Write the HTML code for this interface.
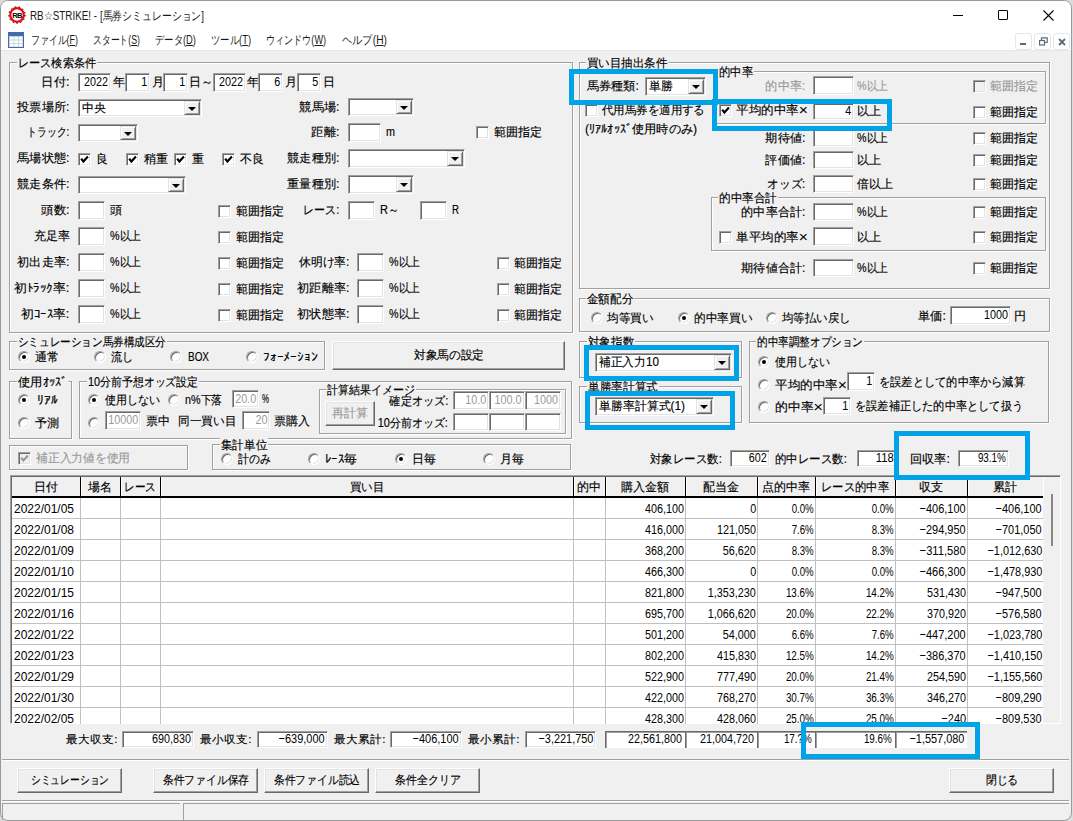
<!DOCTYPE html><html><head><meta charset="utf-8"><title>RB STRIKE</title><style>
*{box-sizing:border-box}
html,body{margin:0;padding:0}
body{-webkit-text-stroke:0.15px currentColor;width:1073px;height:821px;overflow:hidden;position:relative;background:#dcdcdc;font-family:"Liberation Sans",sans-serif;font-size:12px;color:#000}
.a{position:absolute}
.t{position:absolute;white-space:nowrap;line-height:14px;height:14px}
.t span{display:inline-block}
.x{font-style:normal;font-size:15px;line-height:0;-webkit-text-stroke:0;position:relative;top:1px}
.n{font-size:13px;-webkit-text-stroke:0}
.gl span{background:#f0f0f0;padding:0 1px 0 1px}
.e{position:absolute;background:#fff;border:1px solid;border-color:#a0a0a0 #fff #fff #a0a0a0;box-shadow:inset 1px 1px 0 #696969,inset -1px -1px 0 #e3e3e3}
.cb{position:absolute;background:#f0f0f0;border:1px solid;border-color:#e3e3e3 #696969 #696969 #e3e3e3;box-shadow:inset 1px 1px 0 #fff,inset -1px -1px 0 #a0a0a0}
.arr{position:absolute;width:0;height:0;border-left:4px solid transparent;border-right:4px solid transparent;border-top:4px solid #000}
.g{position:absolute;border:1px solid #a0a0a0;box-shadow:inset 1px 1px 0 #fff,1px 1px 0 #fff}
.ck{position:absolute;width:13px;height:13px;background:#fff;border:1px solid;border-color:#a0a0a0 #fff #fff #a0a0a0;box-shadow:inset 1px 1px 0 #696969,inset -1px -1px 0 #e3e3e3}
.ck.dis{background:#f0f0f0}
.rd{position:absolute;width:12px;height:12px;border-radius:50%;background:#fff;border:1px solid;border-color:#a0a0a0 #fff #fff #a0a0a0;box-shadow:inset 1px 1px 0 #696969,inset -1px -1px 0 #e3e3e3}
.dot{position:absolute;width:4px;height:4px;border-radius:50%;background:#000}
.b{position:absolute;background:#f0f0f0;border:1px solid;border-color:#fff #696969 #696969 #fff;box-shadow:inset -1px -1px 0 #a0a0a0,inset 1px 1px 0 #e3e3e3}
.blue{position:absolute;border:5px solid #00a2e8}
.win{position:absolute;left:0;top:0;width:1072px;height:821px;border:1px solid #9a9a9a;border-radius:8px 8px 8px 8px;background:#f0f0f0;overflow:hidden}
</style></head><body>
<div class="win"></div>
<div class="a" style="left:1px;top:1px;width:1070px;height:49px;background:#fff;border-radius:7px 7px 0 0"></div>
<svg class="a" style="left:8px;top:6px;-webkit-text-stroke:0" width="18" height="18"><circle cx="9" cy="9" r="6.8" fill="#fff" stroke="#f00" stroke-width="2.2"/><circle cx="9" cy="9" r="8.2" fill="none" stroke="#000" stroke-width="1" stroke-dasharray="1.5 2.5"/><text x="9" y="11.8" font-size="7.5" font-weight="bold" text-anchor="middle" letter-spacing="-0.6" font-family="Liberation Sans">RB</text></svg>
<div class="t" style="top:9px;left:30px;color:#1a1a1a;font-size:12px;-webkit-text-stroke:0"><span style="--w:174.0;transform:scaleX(0.822);transform-origin:left">RB☆STRIKE! - [馬券シミュレーション]</span></div>
<div class="a" style="left:953px;top:15px;width:10px;height:1px;background:#000"></div>
<div class="a" style="left:998px;top:10px;width:10px;height:10px;border:1px solid #000;border-radius:1px"></div>
<svg class="a" style="left:1043px;top:10px" width="11" height="11"><path d="M0.5 0.5 L10.5 10.5 M10.5 0.5 L0.5 10.5" stroke="#000" stroke-width="1.1"/></svg>
<svg class="a" style="left:8px;top:32px" width="16" height="16"><rect x="0.5" y="0.5" width="15" height="15" fill="#c8d4e4" stroke="#4a6a9a"/><rect x="1" y="1" width="14" height="3" fill="#3d6eb4"/><g fill="#fff"><rect x="2" y="5" width="3.5" height="2.5"/><rect x="6.5" y="5" width="3.5" height="2.5"/><rect x="11" y="5" width="3" height="2.5"/><rect x="2" y="8.5" width="3.5" height="2.5"/><rect x="6.5" y="8.5" width="3.5" height="2.5"/><rect x="11" y="8.5" width="3" height="2.5"/><rect x="2" y="12" width="3.5" height="2.5"/><rect x="6.5" y="12" width="3.5" height="2.5"/><rect x="11" y="12" width="3" height="2.5"/></g></svg>
<div class="t" style="top:33px;left:31px;color:#1a1a1a;-webkit-text-stroke:0"><span style="--w:47.0;transform:scaleX(0.742);transform-origin:left">ファイル(<u>F</u>)</span></div>
<div class="t" style="top:33px;left:93px;color:#1a1a1a;-webkit-text-stroke:0"><span style="--w:47.0;transform:scaleX(0.734);transform-origin:left">スタート(<u>S</u>)</span></div>
<div class="t" style="top:33px;left:155px;color:#1a1a1a;-webkit-text-stroke:0"><span style="--w:41.0;transform:scaleX(0.778);transform-origin:left">データ(<u>D</u>)</span></div>
<div class="t" style="top:33px;left:211px;color:#1a1a1a;-webkit-text-stroke:0"><span style="--w:40.0;transform:scaleX(0.779);transform-origin:left">ツール(<u>T</u>)</span></div>
<div class="t" style="top:33px;left:266px;color:#1a1a1a;-webkit-text-stroke:0"><span style="--w:60.0;transform:scaleX(0.756);transform-origin:left">ウィンドウ(<u>W</u>)</span></div>
<div class="t" style="top:33px;left:342px;color:#1a1a1a;-webkit-text-stroke:0"><span style="--w:45.0;transform:scaleX(0.854);transform-origin:left">ヘルプ(<u>H</u>)</span></div>
<div class="a" style="left:1015px;top:33px;width:17px;height:17px;border:1px solid #e6e6e6;border-radius:3px;background:#fff"></div>
<div class="a" style="left:1034px;top:33px;width:17px;height:17px;border:1px solid #e6e6e6;border-radius:3px;background:#fff"></div>
<div class="a" style="left:1053px;top:33px;width:17px;height:17px;border:1px solid #e6e6e6;border-radius:3px;background:#fff"></div>
<div class="a" style="left:1020px;top:43px;width:6px;height:2px;background:#5a6a7a"></div>
<svg class="a" style="left:1039px;top:37px" width="9" height="9"><rect x="0.5" y="3.5" width="5" height="4.5" fill="none" stroke="#5a6a7a" stroke-width="1.2"/><path d="M2.5 3 V0.8 H8.2 V5.5 H6" fill="none" stroke="#5a6a7a" stroke-width="1.2"/></svg>
<svg class="a" style="left:1058px;top:38px" width="8" height="8"><path d="M1 1 L7 7 M7 1 L1 7" stroke="#5a6a7a" stroke-width="1.8"/></svg>
<div class="a" style="left:1px;top:50px;width:1070px;height:1px;background:#e8e8e8"></div>
<div class="g" style="left:9px;top:62px;width:564px;height:271px;"></div>
<div class="t gl" style="top:56px;left:17px;"><span style="--w:80.0;transform:scaleX(0.930);transform-origin:left">レース検索条件</span></div>
<div class="t" style="top:75px;left:-191px;width:260px;text-align:right;"><span style="--w:28.0;transform:scaleX(1.024);transform-origin:right">日付:</span></div>
<div class="e" style="left:78px;top:73px;width:33px;height:19px;"></div>
<div class="t n" style="top:75px;left:75px;width:33px;text-align:right;"><span style="--w:24.0;transform:scaleX(0.830);transform-origin:right">2022</span></div>
<div class="t" style="top:75px;left:113px;"><span style="--w:12.0;transform:scaleX(1.000);transform-origin:left">年</span></div>
<div class="e" style="left:125px;top:73px;width:25px;height:19px;"></div>
<div class="t n" style="top:75px;left:122px;width:25px;text-align:right;"><span style="--w:6.0;transform:scaleX(0.829);transform-origin:right">1</span></div>
<div class="t" style="top:75px;left:152px;"><span style="--w:12.0;transform:scaleX(1.000);transform-origin:left">月</span></div>
<div class="e" style="left:163px;top:73px;width:25px;height:19px;"></div>
<div class="t n" style="top:75px;left:160px;width:25px;text-align:right;"><span style="--w:6.0;transform:scaleX(0.829);transform-origin:right">1</span></div>
<div class="t" style="top:75px;left:189px;"><span style="--w:24.0;transform:scaleX(1.000);transform-origin:left">日～</span></div>
<div class="e" style="left:213px;top:73px;width:33px;height:19px;"></div>
<div class="t n" style="top:75px;left:210px;width:33px;text-align:right;"><span style="--w:24.0;transform:scaleX(0.830);transform-origin:right">2022</span></div>
<div class="t" style="top:75px;left:247px;"><span style="--w:12.0;transform:scaleX(1.000);transform-origin:left">年</span></div>
<div class="e" style="left:258px;top:73px;width:25px;height:19px;"></div>
<div class="t n" style="top:75px;left:255px;width:25px;text-align:right;"><span style="--w:6.0;transform:scaleX(0.829);transform-origin:right">6</span></div>
<div class="t" style="top:75px;left:285px;"><span style="--w:12.0;transform:scaleX(1.000);transform-origin:left">月</span></div>
<div class="e" style="left:297px;top:73px;width:24px;height:19px;"></div>
<div class="t n" style="top:75px;left:294px;width:24px;text-align:right;"><span style="--w:6.0;transform:scaleX(0.829);transform-origin:right">5</span></div>
<div class="t" style="top:75px;left:323px;"><span style="--w:12.0;transform:scaleX(1.000);transform-origin:left">日</span></div>
<div class="t" style="top:100px;left:-191px;width:260px;text-align:right;"><span style="--w:52.0;transform:scaleX(1.013);transform-origin:right">投票場所:</span></div>
<div class="e" style="left:78px;top:99px;width:124px;height:18px;"></div>
<div class="cb" style="left:184px;top:101px;width:16px;height:14px;"></div>
<div class="arr" style="left:188px;top:107px;"></div>
<div class="t" style="top:101px;left:82px;"><span style="--w:24.0;transform:scaleX(1.000);transform-origin:left">中央</span></div>
<div class="t" style="top:100px;left:79px;width:260px;text-align:right;"><span style="--w:40.0;transform:scaleX(1.017);transform-origin:right">競馬場:</span></div>
<div class="e" style="left:348px;top:98px;width:66px;height:18px;"></div>
<div class="cb" style="left:396px;top:100px;width:16px;height:14px;"></div>
<div class="arr" style="left:400px;top:106px;"></div>
<div class="t" style="top:125px;left:-191px;width:260px;text-align:right;"><span style="--w:42.0;transform:scaleX(0.818);transform-origin:right">トラック:</span></div>
<div class="e" style="left:78px;top:124px;width:60px;height:18px;"></div>
<div class="cb" style="left:120px;top:126px;width:16px;height:14px;"></div>
<div class="arr" style="left:124px;top:132px;"></div>
<div class="t" style="top:125px;left:79px;width:260px;text-align:right;"><span style="--w:28.0;transform:scaleX(1.024);transform-origin:right">距離:</span></div>
<div class="e" style="left:348px;top:123px;width:33px;height:19px;"></div>
<div class="t" style="top:125px;left:386px;"><span style="--w:9.0;transform:scaleX(0.900);transform-origin:left">m</span></div>
<div class="ck" style="left:476px;top:126px;"></div>
<div class="t" style="top:125px;left:494px;"><span style="--w:48.0;transform:scaleX(1.000);transform-origin:left">範囲指定</span></div>
<div class="t" style="top:151px;left:-191px;width:260px;text-align:right;"><span style="--w:52.0;transform:scaleX(1.013);transform-origin:right">馬場状態:</span></div>
<div class="ck" style="left:78px;top:153px;"></div>
<svg class="a" style="left:78px;top:153px" width="13" height="13"><path d="M3.2 5.6 L5.4 8.6 L9.9 3.6" stroke="#000" stroke-width="2.2" fill="none"/></svg>
<div class="t" style="top:152px;left:96px;"><span style="--w:12.0;transform:scaleX(1.000);transform-origin:left">良</span></div>
<div class="ck" style="left:126px;top:153px;"></div>
<svg class="a" style="left:126px;top:153px" width="13" height="13"><path d="M3.2 5.6 L5.4 8.6 L9.9 3.6" stroke="#000" stroke-width="2.2" fill="none"/></svg>
<div class="t" style="top:152px;left:144px;"><span style="--w:24.0;transform:scaleX(1.000);transform-origin:left">稍重</span></div>
<div class="ck" style="left:174px;top:153px;"></div>
<svg class="a" style="left:174px;top:153px" width="13" height="13"><path d="M3.2 5.6 L5.4 8.6 L9.9 3.6" stroke="#000" stroke-width="2.2" fill="none"/></svg>
<div class="t" style="top:152px;left:192px;"><span style="--w:12.0;transform:scaleX(1.000);transform-origin:left">重</span></div>
<div class="ck" style="left:222px;top:153px;"></div>
<svg class="a" style="left:222px;top:153px" width="13" height="13"><path d="M3.2 5.6 L5.4 8.6 L9.9 3.6" stroke="#000" stroke-width="2.2" fill="none"/></svg>
<div class="t" style="top:152px;left:240px;"><span style="--w:24.0;transform:scaleX(1.000);transform-origin:left">不良</span></div>
<div class="t" style="top:151px;left:79px;width:260px;text-align:right;"><span style="--w:52.0;transform:scaleX(1.013);transform-origin:right">競走種別:</span></div>
<div class="e" style="left:348px;top:149px;width:117px;height:19px;"></div>
<div class="cb" style="left:447px;top:151px;width:16px;height:15px;"></div>
<div class="arr" style="left:451px;top:157px;"></div>
<div class="t" style="top:177px;left:-191px;width:260px;text-align:right;"><span style="--w:52.0;transform:scaleX(1.013);transform-origin:right">競走条件:</span></div>
<div class="e" style="left:78px;top:176px;width:108px;height:18px;"></div>
<div class="cb" style="left:168px;top:178px;width:16px;height:14px;"></div>
<div class="arr" style="left:172px;top:184px;"></div>
<div class="t" style="top:177px;left:79px;width:260px;text-align:right;"><span style="--w:52.0;transform:scaleX(1.013);transform-origin:right">重量種別:</span></div>
<div class="e" style="left:348px;top:175px;width:66px;height:19px;"></div>
<div class="cb" style="left:396px;top:177px;width:16px;height:15px;"></div>
<div class="arr" style="left:400px;top:183px;"></div>
<div class="t" style="top:203px;left:-191px;width:260px;text-align:right;"><span style="--w:28.0;transform:scaleX(1.024);transform-origin:right">頭数:</span></div>
<div class="e" style="left:78px;top:201px;width:27px;height:19px;"></div>
<div class="t" style="top:203px;left:110px;"><span style="--w:12.0;transform:scaleX(1.000);transform-origin:left">頭</span></div>
<div class="ck" style="left:218px;top:205px;"></div>
<div class="t" style="top:204px;left:236px;"><span style="--w:48.0;transform:scaleX(1.000);transform-origin:left">範囲指定</span></div>
<div class="t" style="top:203px;left:79px;width:260px;text-align:right;"><span style="--w:36.0;transform:scaleX(0.915);transform-origin:right">レース:</span></div>
<div class="e" style="left:348px;top:201px;width:27px;height:19px;"></div>
<div class="t" style="top:203px;left:380px;"><span style="--w:19.0;transform:scaleX(0.919);transform-origin:left">R～</span></div>
<div class="e" style="left:420px;top:201px;width:27px;height:19px;"></div>
<div class="t" style="top:203px;left:452px;"><span style="--w:7.0;transform:scaleX(0.807);transform-origin:left">R</span></div>
<div class="t" style="top:229px;left:-190px;width:260px;text-align:right;"><span style="--w:36.0;transform:scaleX(1.000);transform-origin:right">充足率</span></div>
<div class="e" style="left:78px;top:227px;width:27px;height:19px;"></div>
<div class="t" style="top:229px;left:110px;"><span style="--w:31.0;transform:scaleX(0.894);transform-origin:left">%以上</span></div>
<div class="ck" style="left:218px;top:231px;"></div>
<div class="t" style="top:230px;left:236px;"><span style="--w:48.0;transform:scaleX(1.000);transform-origin:left">範囲指定</span></div>
<div class="t" style="top:255px;left:-191px;width:260px;text-align:right;"><span style="--w:52.0;transform:scaleX(1.013);transform-origin:right">初出走率:</span></div>
<div class="e" style="left:78px;top:253px;width:27px;height:19px;"></div>
<div class="t" style="top:255px;left:110px;"><span style="--w:31.0;transform:scaleX(0.894);transform-origin:left">%以上</span></div>
<div class="ck" style="left:218px;top:257px;"></div>
<div class="t" style="top:256px;left:236px;"><span style="--w:48.0;transform:scaleX(1.000);transform-origin:left">範囲指定</span></div>
<div class="t" style="top:255px;left:89px;width:260px;text-align:right;"><span style="--w:50.3;transform:scaleX(0.980);transform-origin:right">休明け率:</span></div>
<div class="e" style="left:357px;top:253px;width:27px;height:19px;"></div>
<div class="t" style="top:255px;left:389px;"><span style="--w:31.0;transform:scaleX(0.894);transform-origin:left">%以上</span></div>
<div class="ck" style="left:497px;top:257px;"></div>
<div class="t" style="top:256px;left:514px;"><span style="--w:48.0;transform:scaleX(1.000);transform-origin:left">範囲指定</span></div>
<div class="t" style="top:281px;left:-191px;width:260px;text-align:right;"><span style="--w:55.2;transform:scaleX(1.075);transform-origin:right">初ﾄﾗｯｸ率:</span></div>
<div class="e" style="left:78px;top:279px;width:27px;height:19px;"></div>
<div class="t" style="top:281px;left:110px;"><span style="--w:31.0;transform:scaleX(0.894);transform-origin:left">%以上</span></div>
<div class="ck" style="left:218px;top:283px;"></div>
<div class="t" style="top:282px;left:236px;"><span style="--w:48.0;transform:scaleX(1.000);transform-origin:left">範囲指定</span></div>
<div class="t" style="top:281px;left:89px;width:260px;text-align:right;"><span style="--w:52.0;transform:scaleX(1.013);transform-origin:right">初距離率:</span></div>
<div class="e" style="left:357px;top:279px;width:27px;height:19px;"></div>
<div class="t" style="top:281px;left:389px;"><span style="--w:31.0;transform:scaleX(0.894);transform-origin:left">%以上</span></div>
<div class="ck" style="left:497px;top:283px;"></div>
<div class="t" style="top:282px;left:514px;"><span style="--w:48.0;transform:scaleX(1.000);transform-origin:left">範囲指定</span></div>
<div class="t" style="top:307px;left:-191px;width:260px;text-align:right;"><span style="--w:48.4;transform:scaleX(1.067);transform-origin:right">初ｺｰｽ率:</span></div>
<div class="e" style="left:78px;top:305px;width:27px;height:19px;"></div>
<div class="t" style="top:307px;left:110px;"><span style="--w:31.0;transform:scaleX(0.894);transform-origin:left">%以上</span></div>
<div class="ck" style="left:218px;top:309px;"></div>
<div class="t" style="top:308px;left:236px;"><span style="--w:48.0;transform:scaleX(1.000);transform-origin:left">範囲指定</span></div>
<div class="t" style="top:307px;left:89px;width:260px;text-align:right;"><span style="--w:52.0;transform:scaleX(1.013);transform-origin:right">初状態率:</span></div>
<div class="e" style="left:357px;top:305px;width:27px;height:19px;"></div>
<div class="t" style="top:307px;left:389px;"><span style="--w:31.0;transform:scaleX(0.894);transform-origin:left">%以上</span></div>
<div class="ck" style="left:497px;top:309px;"></div>
<div class="t" style="top:308px;left:514px;"><span style="--w:48.0;transform:scaleX(1.000);transform-origin:left">範囲指定</span></div>
<div class="g" style="left:579px;top:62px;width:471px;height:227px;"></div>
<div class="t gl" style="top:56px;left:586px;"><span style="--w:82.3;transform:scaleX(0.957);transform-origin:left">買い目抽出条件</span></div>
<div class="t" style="top:79px;left:587px;"><span style="--w:52.0;transform:scaleX(1.013);transform-origin:left">馬券種類:</span></div>
<div class="e" style="left:645px;top:77px;width:61px;height:19px;"></div>
<div class="cb" style="left:688px;top:79px;width:16px;height:15px;"></div>
<div class="arr" style="left:692px;top:85px;"></div>
<div class="t" style="top:79px;left:649px;"><span style="--w:24.0;transform:scaleX(1.000);transform-origin:left">単勝</span></div>
<div class="ck" style="left:585px;top:104px;"></div>
<div class="t" style="top:103px;left:602px;"><span style="--w:102.9;transform:scaleX(0.953);transform-origin:left">代用馬券を適用する</span></div>
<div class="t" style="top:122px;left:585px;"><span style="--w:112.2;transform:scaleX(1.020);transform-origin:left">(ﾘｱﾙｵｯｽﾞ使用時のみ)</span></div>
<div class="g" style="left:713px;top:71px;width:333px;height:53px;"></div>
<div class="t gl" style="top:65px;left:718px;"><span style="--w:36.0;transform:scaleX(0.947);transform-origin:left">的中率</span></div>
<div class="t" style="top:79px;left:745px;width:60px;text-align:right;color:#999999;"><span style="--w:40.0;transform:scaleX(1.017);transform-origin:right">的中率:</span></div>
<div class="e" style="left:813px;top:76px;width:41px;height:19px;"></div>
<div class="t" style="top:79px;left:857px;color:#999999;"><span style="--w:31.0;transform:scaleX(0.894);transform-origin:left">%以上</span></div>
<div class="ck dis" style="left:973px;top:80px;"></div>
<div class="t" style="top:79px;left:990px;color:#999999;"><span style="--w:48.0;transform:scaleX(1.000);transform-origin:left">範囲指定</span></div>
<div class="ck" style="left:719px;top:104px;"></div>
<svg class="a" style="left:719px;top:104px" width="13" height="13"><path d="M3.2 5.6 L5.4 8.6 L9.9 3.6" stroke="#000" stroke-width="2.2" fill="none"/></svg>
<div class="t" style="top:103px;left:736px;"><span style="--w:72.0;transform:scaleX(1.047);transform-origin:left">平均的中率<i class=x>×</i></span></div>
<div class="e" style="left:813px;top:103px;width:41px;height:17px;"></div>
<div class="t n" style="top:104px;left:810px;width:41px;text-align:right;"><span style="--w:6.0;transform:scaleX(0.829);transform-origin:right">4</span></div>
<div class="t" style="top:104px;left:857px;"><span style="--w:24.0;transform:scaleX(1.000);transform-origin:left">以上</span></div>
<div class="ck" style="left:973px;top:106px;"></div>
<div class="t" style="top:105px;left:990px;"><span style="--w:48.0;transform:scaleX(1.000);transform-origin:left">範囲指定</span></div>
<div class="t" style="top:131px;left:545px;width:260px;text-align:right;"><span style="--w:40.0;transform:scaleX(1.017);transform-origin:right">期待値:</span></div>
<div class="e" style="left:813px;top:129px;width:41px;height:18px;"></div>
<div class="t" style="top:131px;left:857px;"><span style="--w:31.0;transform:scaleX(0.894);transform-origin:left">%以上</span></div>
<div class="ck" style="left:973px;top:132px;"></div>
<div class="t" style="top:131px;left:990px;"><span style="--w:48.0;transform:scaleX(1.000);transform-origin:left">範囲指定</span></div>
<div class="t" style="top:153px;left:545px;width:260px;text-align:right;"><span style="--w:40.0;transform:scaleX(1.017);transform-origin:right">評価値:</span></div>
<div class="e" style="left:813px;top:151px;width:41px;height:18px;"></div>
<div class="t" style="top:153px;left:857px;"><span style="--w:24.0;transform:scaleX(1.000);transform-origin:left">以上</span></div>
<div class="ck" style="left:973px;top:154px;"></div>
<div class="t" style="top:153px;left:990px;"><span style="--w:48.0;transform:scaleX(1.000);transform-origin:left">範囲指定</span></div>
<div class="t" style="top:177px;left:545px;width:260px;text-align:right;"><span style="--w:38.0;transform:scaleX(0.966);transform-origin:right">オッズ:</span></div>
<div class="e" style="left:813px;top:175px;width:41px;height:18px;"></div>
<div class="t" style="top:177px;left:857px;"><span style="--w:36.0;transform:scaleX(1.000);transform-origin:left">倍以上</span></div>
<div class="ck" style="left:973px;top:178px;"></div>
<div class="t" style="top:177px;left:990px;"><span style="--w:48.0;transform:scaleX(1.000);transform-origin:left">範囲指定</span></div>
<div class="g" style="left:711px;top:197px;width:335px;height:54px;"></div>
<div class="t gl" style="top:191px;left:718px;"><span style="--w:60.0;transform:scaleX(0.968);transform-origin:left">的中率合計</span></div>
<div class="t" style="top:205px;left:545px;width:260px;text-align:right;"><span style="--w:64.0;transform:scaleX(1.010);transform-origin:right">的中率合計:</span></div>
<div class="e" style="left:813px;top:203px;width:41px;height:18px;"></div>
<div class="t" style="top:205px;left:857px;"><span style="--w:31.0;transform:scaleX(0.894);transform-origin:left">%以上</span></div>
<div class="ck" style="left:973px;top:206px;"></div>
<div class="t" style="top:205px;left:990px;"><span style="--w:48.0;transform:scaleX(1.000);transform-origin:left">範囲指定</span></div>
<div class="ck" style="left:719px;top:231px;"></div>
<div class="t" style="top:230px;left:736px;"><span style="--w:72.0;transform:scaleX(1.047);transform-origin:left">単平均的率<i class=x>×</i></span></div>
<div class="e" style="left:813px;top:227px;width:41px;height:19px;"></div>
<div class="t" style="top:230px;left:857px;"><span style="--w:24.0;transform:scaleX(1.000);transform-origin:left">以上</span></div>
<div class="ck" style="left:973px;top:231px;"></div>
<div class="t" style="top:230px;left:990px;"><span style="--w:48.0;transform:scaleX(1.000);transform-origin:left">範囲指定</span></div>
<div class="t" style="top:261px;left:545px;width:260px;text-align:right;"><span style="--w:64.0;transform:scaleX(1.010);transform-origin:right">期待値合計:</span></div>
<div class="e" style="left:813px;top:259px;width:41px;height:18px;"></div>
<div class="t" style="top:261px;left:857px;"><span style="--w:31.0;transform:scaleX(0.894);transform-origin:left">%以上</span></div>
<div class="ck" style="left:973px;top:262px;"></div>
<div class="t" style="top:261px;left:990px;"><span style="--w:48.0;transform:scaleX(1.000);transform-origin:left">範囲指定</span></div>
<div class="g" style="left:579px;top:298px;width:471px;height:34px;"></div>
<div class="t gl" style="top:292px;left:586px;"><span style="--w:48.0;transform:scaleX(0.960);transform-origin:left">金額配分</span></div>
<div class="rd" style="left:591px;top:312px;"></div>
<div class="t" style="top:311px;left:607px;"><span style="--w:46.3;transform:scaleX(0.965);transform-origin:left">均等買い</span></div>
<div class="rd" style="left:678px;top:312px;"></div>
<div class="dot" style="left:682px;top:316px;"></div>
<div class="t" style="top:311px;left:694px;"><span style="--w:58.3;transform:scaleX(0.972);transform-origin:left">的中率買い</span></div>
<div class="rd" style="left:766px;top:312px;"></div>
<div class="t" style="top:311px;left:782px;"><span style="--w:68.6;transform:scaleX(0.953);transform-origin:left">均等払い戻し</span></div>
<div class="t" style="top:309px;left:918px;"><span style="--w:28.0;transform:scaleX(1.024);transform-origin:left">単価:</span></div>
<div class="e" style="left:950px;top:306px;width:61px;height:19px;"></div>
<div class="t n" style="top:308px;left:947px;width:61px;text-align:right;"><span style="--w:24.0;transform:scaleX(0.830);transform-origin:right">1000</span></div>
<div class="t" style="top:309px;left:1014px;"><span style="--w:12.0;transform:scaleX(1.000);transform-origin:left">円</span></div>
<div class="g" style="left:9px;top:341px;width:316px;height:29px;"></div>
<div class="t gl" style="top:335px;left:17px;"><span style="--w:150.0;transform:scaleX(0.882);transform-origin:left">シミュレーション馬券構成区分</span></div>
<div class="rd" style="left:18px;top:351px;"></div>
<div class="dot" style="left:22px;top:355px;"></div>
<div class="t" style="top:350px;left:35px;"><span style="--w:24.0;transform:scaleX(1.000);transform-origin:left">通常</span></div>
<div class="rd" style="left:94px;top:351px;"></div>
<div class="t" style="top:350px;left:111px;"><span style="--w:22.3;transform:scaleX(0.929);transform-origin:left">流し</span></div>
<div class="rd" style="left:170px;top:351px;"></div>
<div class="t" style="top:350px;left:188px;"><span style="--w:21.0;transform:scaleX(0.829);transform-origin:left">BOX</span></div>
<div class="rd" style="left:246px;top:351px;"></div>
<div class="t" style="top:350px;left:263px;"><span style="--w:54.4;transform:scaleX(1.133);transform-origin:left">ﾌｫｰﾒｰｼｮﾝ</span></div>
<div class="b" style="left:332px;top:341px;width:233px;height:29px;"></div>
<div class="t" style="top:348px;left:332px;width:233px;text-align:center;"><span style="--w:70.3;transform:scaleX(0.976);transform-origin:center">対象馬の設定</span></div>
<div class="g" style="left:9px;top:381px;width:63px;height:58px;"></div>
<div class="t gl" style="top:375px;left:17px;"><span style="--w:51.2;transform:scaleX(1.024);transform-origin:left">使用ｵｯｽﾞ</span></div>
<div class="rd" style="left:18px;top:394px;"></div>
<div class="dot" style="left:22px;top:398px;"></div>
<div class="t" style="top:393px;left:37px;"><span style="--w:20.4;transform:scaleX(1.133);transform-origin:left">ﾘｱﾙ</span></div>
<div class="rd" style="left:18px;top:417px;"></div>
<div class="t" style="top:416px;left:35px;"><span style="--w:24.0;transform:scaleX(1.000);transform-origin:left">予測</span></div>
<div class="g" style="left:79px;top:381px;width:493px;height:58px;"></div>
<div class="t gl" style="top:375px;left:87px;"><span style="--w:112.0;transform:scaleX(0.908);transform-origin:left">10分前予想オッズ設定</span></div>
<div class="rd" style="left:88px;top:394px;"></div>
<div class="dot" style="left:92px;top:398px;"></div>
<div class="t" style="top:393px;left:105px;"><span style="--w:54.9;transform:scaleX(0.915);transform-origin:left">使用しない</span></div>
<div class="rd" style="left:168px;top:394px;"></div>
<div class="t" style="top:393px;left:185px;"><span style="--w:37.0;transform:scaleX(0.895);transform-origin:left">n%下落</span></div>
<div class="e" style="left:232px;top:390px;width:27px;height:18px;"></div>
<div class="t n" style="top:392px;left:229px;width:27px;text-align:right;color:#999999;"><span style="--w:21.0;transform:scaleX(0.830);transform-origin:right">20.0</span></div>
<div class="t" style="top:392px;left:262px;"><span style="--w:7.0;transform:scaleX(0.656);transform-origin:left">%</span></div>
<div class="rd" style="left:88px;top:417px;"></div>
<div class="e" style="left:105px;top:411px;width:36px;height:19px;"></div>
<div class="t n" style="top:413px;left:102px;width:36px;text-align:right;color:#999999;"><span style="--w:30.0;transform:scaleX(0.830);transform-origin:right">10000</span></div>
<div class="t" style="top:414px;left:146px;"><span style="--w:24.0;transform:scaleX(1.000);transform-origin:left">票中</span></div>
<div class="t" style="top:414px;left:178px;"><span style="--w:58.3;transform:scaleX(0.972);transform-origin:left">同一買い目</span></div>
<div class="e" style="left:242px;top:411px;width:28px;height:19px;"></div>
<div class="t n" style="top:413px;left:239px;width:28px;text-align:right;color:#999999;"><span style="--w:12.0;transform:scaleX(0.829);transform-origin:right">20</span></div>
<div class="t" style="top:414px;left:274px;"><span style="--w:36.0;transform:scaleX(1.000);transform-origin:left">票購入</span></div>
<div class="g" style="left:319px;top:389px;width:247px;height:45px;"></div>
<div class="t gl" style="top:383px;left:326px;"><span style="--w:90.0;transform:scaleX(0.918);transform-origin:left">計算結果イメージ</span></div>
<div class="b" style="left:325px;top:401px;width:50px;height:25px;"></div>
<div class="t" style="top:406px;left:325px;width:50px;text-align:center;color:#999999;"><span style="--w:36.0;transform:scaleX(1.000);transform-origin:center">再計算</span></div>
<div class="t" style="top:394px;left:188px;width:260px;text-align:right;"><span style="--w:59.0;transform:scaleX(0.931);transform-origin:right">確定オッズ:</span></div>
<div class="e" style="left:453px;top:391px;width:36px;height:19px;"></div>
<div class="t n" style="top:393px;left:450px;width:36px;text-align:right;color:#999999;"><span style="--w:21.0;transform:scaleX(0.830);transform-origin:right">10.0</span></div>
<div class="e" style="left:489px;top:391px;width:36px;height:19px;"></div>
<div class="t n" style="top:393px;left:486px;width:36px;text-align:right;color:#999999;"><span style="--w:27.0;transform:scaleX(0.830);transform-origin:right">100.0</span></div>
<div class="e" style="left:525px;top:391px;width:36px;height:19px;"></div>
<div class="t n" style="top:393px;left:522px;width:36px;text-align:right;color:#999999;"><span style="--w:24.0;transform:scaleX(0.830);transform-origin:right">1000</span></div>
<div class="t" style="top:416px;left:188px;width:260px;text-align:right;"><span style="--w:70.0;transform:scaleX(0.913);transform-origin:right">10分前オッズ:</span></div>
<div class="e" style="left:453px;top:413px;width:36px;height:18px;"></div>
<div class="e" style="left:489px;top:413px;width:36px;height:18px;"></div>
<div class="e" style="left:525px;top:413px;width:36px;height:18px;"></div>
<div class="g" style="left:9px;top:445px;width:179px;height:25px;"></div>
<div class="ck dis" style="left:18px;top:452px;"></div>
<svg class="a" style="left:18px;top:452px" width="13" height="13"><path d="M3.2 5.6 L5.4 8.6 L9.9 3.6" stroke="#999999" stroke-width="2.2" fill="none"/></svg>
<div class="t" style="top:451px;left:36px;color:#999999;"><span style="--w:94.3;transform:scaleX(0.982);transform-origin:left">補正入力値を使用</span></div>
<div class="g" style="left:212px;top:444px;width:359px;height:26px;"></div>
<div class="t gl" style="top:438px;left:220px;"><span style="--w:48.0;transform:scaleX(0.960);transform-origin:left">集計単位</span></div>
<div class="rd" style="left:221px;top:453px;"></div>
<div class="t" style="top:452px;left:238px;"><span style="--w:32.6;transform:scaleX(0.906);transform-origin:left">計のみ</span></div>
<div class="rd" style="left:308px;top:453px;"></div>
<div class="t" style="top:452px;left:325px;"><span style="--w:32.4;transform:scaleX(1.080);transform-origin:left">ﾚｰｽ毎</span></div>
<div class="rd" style="left:395px;top:453px;"></div>
<div class="dot" style="left:399px;top:457px;"></div>
<div class="t" style="top:452px;left:412px;"><span style="--w:24.0;transform:scaleX(1.000);transform-origin:left">日毎</span></div>
<div class="rd" style="left:483px;top:453px;"></div>
<div class="t" style="top:452px;left:500px;"><span style="--w:24.0;transform:scaleX(1.000);transform-origin:left">月毎</span></div>
<div class="g" style="left:579px;top:341px;width:163px;height:37px;"></div>
<div class="t gl" style="top:335px;left:587px;"><span style="--w:48.0;transform:scaleX(0.960);transform-origin:left">対象指数</span></div>
<div class="e" style="left:595px;top:353px;width:137px;height:19px;"></div>
<div class="cb" style="left:714px;top:355px;width:16px;height:15px;"></div>
<div class="arr" style="left:718px;top:361px;"></div>
<div class="t" style="top:355px;left:599px;"><span style="--w:60.0;transform:scaleX(0.978);transform-origin:left">補正入力10</span></div>
<div class="g" style="left:579px;top:386px;width:163px;height:37px;"></div>
<div class="t gl" style="top:380px;left:587px;"><span style="--w:72.0;transform:scaleX(0.973);transform-origin:left">単勝率計算式</span></div>
<div class="e" style="left:595px;top:397px;width:119px;height:19px;"></div>
<div class="cb" style="left:696px;top:399px;width:16px;height:15px;"></div>
<div class="arr" style="left:700px;top:405px;"></div>
<div class="t" style="top:399px;left:599px;"><span style="--w:86.0;transform:scaleX(0.992);transform-origin:left">単勝率計算式(1)</span></div>
<div class="g" style="left:749px;top:341px;width:300px;height:82px;"></div>
<div class="t gl" style="top:335px;left:756px;"><span style="--w:108.0;transform:scaleX(0.885);transform-origin:left">的中率調整オプション</span></div>
<div class="rd" style="left:758px;top:356px;"></div>
<div class="dot" style="left:762px;top:360px;"></div>
<div class="t" style="top:355px;left:775px;"><span style="--w:54.9;transform:scaleX(0.915);transform-origin:left">使用しない</span></div>
<div class="rd" style="left:758px;top:379px;"></div>
<div class="t" style="top:378px;left:775px;"><span style="--w:72.0;transform:scaleX(1.047);transform-origin:left">平均的中率<i class=x>×</i></span></div>
<div class="e" style="left:847px;top:372px;width:28px;height:19px;"></div>
<div class="t n" style="top:374px;left:844px;width:28px;text-align:right;"><span style="--w:6.0;transform:scaleX(0.829);transform-origin:right">1</span></div>
<div class="t" style="top:375px;left:879px;"><span style="--w:145.8;transform:scaleX(0.935);transform-origin:left">を誤差として的中率から減算</span></div>
<div class="rd" style="left:758px;top:401px;"></div>
<div class="t" style="top:400px;left:775px;"><span style="--w:48.0;transform:scaleX(1.072);transform-origin:left">的中率<i class=x>×</i></span></div>
<div class="e" style="left:823px;top:397px;width:28px;height:18px;"></div>
<div class="t n" style="top:399px;left:820px;width:28px;text-align:right;"><span style="--w:6.0;transform:scaleX(0.829);transform-origin:right">1</span></div>
<div class="t" style="top:399px;left:855px;"><span style="--w:168.1;transform:scaleX(0.934);transform-origin:left">を誤差補正した的中率として扱う</span></div>
<div class="t" style="top:452px;left:650px;"><span style="--w:72.0;transform:scaleX(0.956);transform-origin:left">対象レース数:</span></div>
<div class="e" style="left:730px;top:450px;width:40px;height:17px;"></div>
<div class="t n" style="top:451px;left:727px;width:40px;text-align:right;"><span style="--w:18.0;transform:scaleX(0.829);transform-origin:right">602</span></div>
<div class="t" style="top:452px;left:775px;"><span style="--w:72.0;transform:scaleX(0.956);transform-origin:left">的中レース数:</span></div>
<div class="e" style="left:857px;top:450px;width:40px;height:17px;"></div>
<div class="t n" style="top:451px;left:854px;width:40px;text-align:right;"><span style="--w:18.0;transform:scaleX(0.868);transform-origin:right">118</span></div>
<div class="t" style="top:452px;left:910px;"><span style="--w:40.0;transform:scaleX(1.017);transform-origin:left">回収率:</span></div>
<div class="e" style="left:958px;top:450px;width:51px;height:17px;"></div>
<div class="t n" style="top:451px;left:955px;width:51px;text-align:right;"><span style="--w:28.0;transform:scaleX(0.759);transform-origin:right">93.1%</span></div>
<div class="a" style="left:10px;top:475px;width:1051px;height:249px;background:#f0f0f0;border:1px solid #a0a0a0;border-color:#a0a0a0 #fff #fff #a0a0a0;box-shadow:inset 1px 1px 0 #696969"></div>
<div class="a" style="left:12px;top:497px;width:1031px;height:227px;background:#fff"></div>
<div class="a" style="left:12px;top:496px;width:1031px;height:2px;background:#000"></div>
<div class="t" style="top:480px;left:12px;width:68px;text-align:center;"><span style="--w:24.0;transform:scaleX(1.000);transform-origin:center">日付</span></div>
<div class="t" style="top:480px;left:80px;width:40px;text-align:center;"><span style="--w:24.0;transform:scaleX(1.000);transform-origin:center">場名</span></div>
<div class="t" style="top:480px;left:120px;width:40px;text-align:center;"><span style="--w:32.0;transform:scaleX(0.889);transform-origin:center">レース</span></div>
<div class="t" style="top:480px;left:160px;width:413px;text-align:center;"><span style="--w:34.3;transform:scaleX(0.953);transform-origin:center">買い目</span></div>
<div class="t" style="top:480px;left:573px;width:32px;text-align:center;"><span style="--w:24.0;transform:scaleX(1.000);transform-origin:center">的中</span></div>
<div class="t" style="top:480px;left:605px;width:80px;text-align:center;"><span style="--w:48.0;transform:scaleX(1.000);transform-origin:center">購入金額</span></div>
<div class="t" style="top:480px;left:685px;width:72px;text-align:center;"><span style="--w:36.0;transform:scaleX(1.000);transform-origin:center">配当金</span></div>
<div class="t" style="top:480px;left:757px;width:58px;text-align:center;"><span style="--w:48.0;transform:scaleX(1.000);transform-origin:center">点的中率</span></div>
<div class="t" style="top:480px;left:815px;width:80px;text-align:center;"><span style="--w:68.0;transform:scaleX(0.944);transform-origin:center">レース的中率</span></div>
<div class="t" style="top:480px;left:895px;width:72px;text-align:center;"><span style="--w:24.0;transform:scaleX(1.000);transform-origin:center">収支</span></div>
<div class="t" style="top:480px;left:967px;width:76px;text-align:center;"><span style="--w:24.0;transform:scaleX(1.000);transform-origin:center">累計</span></div>
<div class="a" style="left:80px;top:477px;width:1px;height:19px;background:#000"></div>
<div class="a" style="left:81px;top:477px;width:1px;height:19px;background:#fff"></div>
<div class="a" style="left:120px;top:477px;width:1px;height:19px;background:#000"></div>
<div class="a" style="left:121px;top:477px;width:1px;height:19px;background:#fff"></div>
<div class="a" style="left:160px;top:477px;width:1px;height:19px;background:#000"></div>
<div class="a" style="left:161px;top:477px;width:1px;height:19px;background:#fff"></div>
<div class="a" style="left:573px;top:477px;width:1px;height:19px;background:#000"></div>
<div class="a" style="left:574px;top:477px;width:1px;height:19px;background:#fff"></div>
<div class="a" style="left:605px;top:477px;width:1px;height:19px;background:#000"></div>
<div class="a" style="left:606px;top:477px;width:1px;height:19px;background:#fff"></div>
<div class="a" style="left:685px;top:477px;width:1px;height:19px;background:#000"></div>
<div class="a" style="left:686px;top:477px;width:1px;height:19px;background:#fff"></div>
<div class="a" style="left:757px;top:477px;width:1px;height:19px;background:#000"></div>
<div class="a" style="left:758px;top:477px;width:1px;height:19px;background:#fff"></div>
<div class="a" style="left:815px;top:477px;width:1px;height:19px;background:#000"></div>
<div class="a" style="left:816px;top:477px;width:1px;height:19px;background:#fff"></div>
<div class="a" style="left:895px;top:477px;width:1px;height:19px;background:#000"></div>
<div class="a" style="left:896px;top:477px;width:1px;height:19px;background:#fff"></div>
<div class="a" style="left:967px;top:477px;width:1px;height:19px;background:#000"></div>
<div class="a" style="left:968px;top:477px;width:1px;height:19px;background:#fff"></div>
<div class="a" style="left:12px;top:498px;width:1031px;height:226px;overflow:hidden">
<div class="a" style="left:0;top:20px;width:1031px;height:1px;background:#c0c0c0"></div>
<div class="t n" style="top:4px;left:2px;"><span style="--w:60.0;transform:scaleX(0.922);transform-origin:left">2022/01/05</span></div>
<div class="t n" style="top:4px;left:592px;width:80px;text-align:right;"><span style="--w:39.0;transform:scaleX(0.830);transform-origin:right">406,100</span></div>
<div class="t n" style="top:4px;left:664px;width:80px;text-align:right;"><span style="--w:6.0;transform:scaleX(0.829);transform-origin:right">0</span></div>
<div class="t n" style="top:4px;left:722px;width:80px;text-align:right;"><span style="--w:22.0;transform:scaleX(0.742);transform-origin:right">0.0%</span></div>
<div class="t n" style="top:4px;left:802px;width:80px;text-align:right;"><span style="--w:22.0;transform:scaleX(0.742);transform-origin:right">0.0%</span></div>
<div class="t n" style="top:4px;left:874px;width:80px;text-align:right;"><span style="--w:46.0;transform:scaleX(0.843);transform-origin:right">−406,100</span></div>
<div class="t n" style="top:4px;left:950px;width:80px;text-align:right;"><span style="--w:46.0;transform:scaleX(0.843);transform-origin:right">−406,100</span></div>
<div class="a" style="left:0;top:41px;width:1031px;height:1px;background:#c0c0c0"></div>
<div class="t n" style="top:25px;left:2px;"><span style="--w:60.0;transform:scaleX(0.922);transform-origin:left">2022/01/08</span></div>
<div class="t n" style="top:25px;left:592px;width:80px;text-align:right;"><span style="--w:39.0;transform:scaleX(0.830);transform-origin:right">416,000</span></div>
<div class="t n" style="top:25px;left:664px;width:80px;text-align:right;"><span style="--w:39.0;transform:scaleX(0.830);transform-origin:right">121,050</span></div>
<div class="t n" style="top:25px;left:722px;width:80px;text-align:right;"><span style="--w:22.0;transform:scaleX(0.742);transform-origin:right">7.6%</span></div>
<div class="t n" style="top:25px;left:802px;width:80px;text-align:right;"><span style="--w:22.0;transform:scaleX(0.742);transform-origin:right">8.3%</span></div>
<div class="t n" style="top:25px;left:874px;width:80px;text-align:right;"><span style="--w:46.0;transform:scaleX(0.843);transform-origin:right">−294,950</span></div>
<div class="t n" style="top:25px;left:950px;width:80px;text-align:right;"><span style="--w:46.0;transform:scaleX(0.843);transform-origin:right">−701,050</span></div>
<div class="a" style="left:0;top:62px;width:1031px;height:1px;background:#c0c0c0"></div>
<div class="t n" style="top:46px;left:2px;"><span style="--w:60.0;transform:scaleX(0.922);transform-origin:left">2022/01/09</span></div>
<div class="t n" style="top:46px;left:592px;width:80px;text-align:right;"><span style="--w:39.0;transform:scaleX(0.830);transform-origin:right">368,200</span></div>
<div class="t n" style="top:46px;left:664px;width:80px;text-align:right;"><span style="--w:33.0;transform:scaleX(0.830);transform-origin:right">56,620</span></div>
<div class="t n" style="top:46px;left:722px;width:80px;text-align:right;"><span style="--w:22.0;transform:scaleX(0.742);transform-origin:right">8.3%</span></div>
<div class="t n" style="top:46px;left:802px;width:80px;text-align:right;"><span style="--w:22.0;transform:scaleX(0.742);transform-origin:right">8.3%</span></div>
<div class="t n" style="top:46px;left:874px;width:80px;text-align:right;"><span style="--w:46.0;transform:scaleX(0.858);transform-origin:right">−311,580</span></div>
<div class="t n" style="top:46px;left:950px;width:80px;text-align:right;"><span style="--w:55.0;transform:scaleX(0.840);transform-origin:right">−1,012,630</span></div>
<div class="a" style="left:0;top:83px;width:1031px;height:1px;background:#c0c0c0"></div>
<div class="t n" style="top:67px;left:2px;"><span style="--w:60.0;transform:scaleX(0.922);transform-origin:left">2022/01/10</span></div>
<div class="t n" style="top:67px;left:592px;width:80px;text-align:right;"><span style="--w:39.0;transform:scaleX(0.830);transform-origin:right">466,300</span></div>
<div class="t n" style="top:67px;left:664px;width:80px;text-align:right;"><span style="--w:6.0;transform:scaleX(0.829);transform-origin:right">0</span></div>
<div class="t n" style="top:67px;left:722px;width:80px;text-align:right;"><span style="--w:22.0;transform:scaleX(0.742);transform-origin:right">0.0%</span></div>
<div class="t n" style="top:67px;left:802px;width:80px;text-align:right;"><span style="--w:22.0;transform:scaleX(0.742);transform-origin:right">0.0%</span></div>
<div class="t n" style="top:67px;left:874px;width:80px;text-align:right;"><span style="--w:46.0;transform:scaleX(0.843);transform-origin:right">−466,300</span></div>
<div class="t n" style="top:67px;left:950px;width:80px;text-align:right;"><span style="--w:55.0;transform:scaleX(0.840);transform-origin:right">−1,478,930</span></div>
<div class="a" style="left:0;top:104px;width:1031px;height:1px;background:#c0c0c0"></div>
<div class="t n" style="top:88px;left:2px;"><span style="--w:60.0;transform:scaleX(0.922);transform-origin:left">2022/01/15</span></div>
<div class="t n" style="top:88px;left:592px;width:80px;text-align:right;"><span style="--w:39.0;transform:scaleX(0.830);transform-origin:right">821,800</span></div>
<div class="t n" style="top:88px;left:664px;width:80px;text-align:right;"><span style="--w:48.0;transform:scaleX(0.830);transform-origin:right">1,353,230</span></div>
<div class="t n" style="top:88px;left:722px;width:80px;text-align:right;"><span style="--w:28.0;transform:scaleX(0.759);transform-origin:right">13.6%</span></div>
<div class="t n" style="top:88px;left:802px;width:80px;text-align:right;"><span style="--w:28.0;transform:scaleX(0.759);transform-origin:right">14.2%</span></div>
<div class="t n" style="top:88px;left:874px;width:80px;text-align:right;"><span style="--w:39.0;transform:scaleX(0.830);transform-origin:right">531,430</span></div>
<div class="t n" style="top:88px;left:950px;width:80px;text-align:right;"><span style="--w:46.0;transform:scaleX(0.843);transform-origin:right">−947,500</span></div>
<div class="a" style="left:0;top:125px;width:1031px;height:1px;background:#c0c0c0"></div>
<div class="t n" style="top:109px;left:2px;"><span style="--w:60.0;transform:scaleX(0.922);transform-origin:left">2022/01/16</span></div>
<div class="t n" style="top:109px;left:592px;width:80px;text-align:right;"><span style="--w:39.0;transform:scaleX(0.830);transform-origin:right">695,700</span></div>
<div class="t n" style="top:109px;left:664px;width:80px;text-align:right;"><span style="--w:48.0;transform:scaleX(0.830);transform-origin:right">1,066,620</span></div>
<div class="t n" style="top:109px;left:722px;width:80px;text-align:right;"><span style="--w:28.0;transform:scaleX(0.759);transform-origin:right">20.0%</span></div>
<div class="t n" style="top:109px;left:802px;width:80px;text-align:right;"><span style="--w:28.0;transform:scaleX(0.759);transform-origin:right">22.2%</span></div>
<div class="t n" style="top:109px;left:874px;width:80px;text-align:right;"><span style="--w:39.0;transform:scaleX(0.830);transform-origin:right">370,920</span></div>
<div class="t n" style="top:109px;left:950px;width:80px;text-align:right;"><span style="--w:46.0;transform:scaleX(0.843);transform-origin:right">−576,580</span></div>
<div class="a" style="left:0;top:146px;width:1031px;height:1px;background:#c0c0c0"></div>
<div class="t n" style="top:130px;left:2px;"><span style="--w:60.0;transform:scaleX(0.922);transform-origin:left">2022/01/22</span></div>
<div class="t n" style="top:130px;left:592px;width:80px;text-align:right;"><span style="--w:39.0;transform:scaleX(0.830);transform-origin:right">501,200</span></div>
<div class="t n" style="top:130px;left:664px;width:80px;text-align:right;"><span style="--w:33.0;transform:scaleX(0.830);transform-origin:right">54,000</span></div>
<div class="t n" style="top:130px;left:722px;width:80px;text-align:right;"><span style="--w:22.0;transform:scaleX(0.742);transform-origin:right">6.6%</span></div>
<div class="t n" style="top:130px;left:802px;width:80px;text-align:right;"><span style="--w:22.0;transform:scaleX(0.742);transform-origin:right">7.6%</span></div>
<div class="t n" style="top:130px;left:874px;width:80px;text-align:right;"><span style="--w:46.0;transform:scaleX(0.843);transform-origin:right">−447,200</span></div>
<div class="t n" style="top:130px;left:950px;width:80px;text-align:right;"><span style="--w:55.0;transform:scaleX(0.840);transform-origin:right">−1,023,780</span></div>
<div class="a" style="left:0;top:167px;width:1031px;height:1px;background:#c0c0c0"></div>
<div class="t n" style="top:151px;left:2px;"><span style="--w:60.0;transform:scaleX(0.922);transform-origin:left">2022/01/23</span></div>
<div class="t n" style="top:151px;left:592px;width:80px;text-align:right;"><span style="--w:39.0;transform:scaleX(0.830);transform-origin:right">802,200</span></div>
<div class="t n" style="top:151px;left:664px;width:80px;text-align:right;"><span style="--w:39.0;transform:scaleX(0.830);transform-origin:right">415,830</span></div>
<div class="t n" style="top:151px;left:722px;width:80px;text-align:right;"><span style="--w:28.0;transform:scaleX(0.759);transform-origin:right">12.5%</span></div>
<div class="t n" style="top:151px;left:802px;width:80px;text-align:right;"><span style="--w:28.0;transform:scaleX(0.759);transform-origin:right">14.2%</span></div>
<div class="t n" style="top:151px;left:874px;width:80px;text-align:right;"><span style="--w:46.0;transform:scaleX(0.843);transform-origin:right">−386,370</span></div>
<div class="t n" style="top:151px;left:950px;width:80px;text-align:right;"><span style="--w:55.0;transform:scaleX(0.840);transform-origin:right">−1,410,150</span></div>
<div class="a" style="left:0;top:188px;width:1031px;height:1px;background:#c0c0c0"></div>
<div class="t n" style="top:172px;left:2px;"><span style="--w:60.0;transform:scaleX(0.922);transform-origin:left">2022/01/29</span></div>
<div class="t n" style="top:172px;left:592px;width:80px;text-align:right;"><span style="--w:39.0;transform:scaleX(0.830);transform-origin:right">522,900</span></div>
<div class="t n" style="top:172px;left:664px;width:80px;text-align:right;"><span style="--w:39.0;transform:scaleX(0.830);transform-origin:right">777,490</span></div>
<div class="t n" style="top:172px;left:722px;width:80px;text-align:right;"><span style="--w:28.0;transform:scaleX(0.759);transform-origin:right">20.0%</span></div>
<div class="t n" style="top:172px;left:802px;width:80px;text-align:right;"><span style="--w:28.0;transform:scaleX(0.759);transform-origin:right">21.4%</span></div>
<div class="t n" style="top:172px;left:874px;width:80px;text-align:right;"><span style="--w:39.0;transform:scaleX(0.830);transform-origin:right">254,590</span></div>
<div class="t n" style="top:172px;left:950px;width:80px;text-align:right;"><span style="--w:55.0;transform:scaleX(0.840);transform-origin:right">−1,155,560</span></div>
<div class="a" style="left:0;top:209px;width:1031px;height:1px;background:#c0c0c0"></div>
<div class="t n" style="top:193px;left:2px;"><span style="--w:60.0;transform:scaleX(0.922);transform-origin:left">2022/01/30</span></div>
<div class="t n" style="top:193px;left:592px;width:80px;text-align:right;"><span style="--w:39.0;transform:scaleX(0.830);transform-origin:right">422,000</span></div>
<div class="t n" style="top:193px;left:664px;width:80px;text-align:right;"><span style="--w:39.0;transform:scaleX(0.830);transform-origin:right">768,270</span></div>
<div class="t n" style="top:193px;left:722px;width:80px;text-align:right;"><span style="--w:28.0;transform:scaleX(0.759);transform-origin:right">30.7%</span></div>
<div class="t n" style="top:193px;left:802px;width:80px;text-align:right;"><span style="--w:28.0;transform:scaleX(0.759);transform-origin:right">36.3%</span></div>
<div class="t n" style="top:193px;left:874px;width:80px;text-align:right;"><span style="--w:39.0;transform:scaleX(0.830);transform-origin:right">346,270</span></div>
<div class="t n" style="top:193px;left:950px;width:80px;text-align:right;"><span style="--w:46.0;transform:scaleX(0.843);transform-origin:right">−809,290</span></div>
<div class="a" style="left:0;top:230px;width:1031px;height:1px;background:#c0c0c0"></div>
<div class="t n" style="top:214px;left:2px;"><span style="--w:60.0;transform:scaleX(0.922);transform-origin:left">2022/02/05</span></div>
<div class="t n" style="top:214px;left:592px;width:80px;text-align:right;"><span style="--w:39.0;transform:scaleX(0.830);transform-origin:right">428,300</span></div>
<div class="t n" style="top:214px;left:664px;width:80px;text-align:right;"><span style="--w:39.0;transform:scaleX(0.830);transform-origin:right">428,060</span></div>
<div class="t n" style="top:214px;left:722px;width:80px;text-align:right;"><span style="--w:28.0;transform:scaleX(0.759);transform-origin:right">25.0%</span></div>
<div class="t n" style="top:214px;left:802px;width:80px;text-align:right;"><span style="--w:28.0;transform:scaleX(0.759);transform-origin:right">25.0%</span></div>
<div class="t n" style="top:214px;left:874px;width:80px;text-align:right;"><span style="--w:25.0;transform:scaleX(0.853);transform-origin:right">−240</span></div>
<div class="t n" style="top:214px;left:950px;width:80px;text-align:right;"><span style="--w:46.0;transform:scaleX(0.843);transform-origin:right">−809,530</span></div>
<div class="a" style="left:68px;top:0;width:1px;height:226px;background:#c0c0c0"></div>
<div class="a" style="left:108px;top:0;width:1px;height:226px;background:#c0c0c0"></div>
<div class="a" style="left:148px;top:0;width:1px;height:226px;background:#c0c0c0"></div>
<div class="a" style="left:561px;top:0;width:1px;height:226px;background:#c0c0c0"></div>
<div class="a" style="left:593px;top:0;width:1px;height:226px;background:#c0c0c0"></div>
<div class="a" style="left:673px;top:0;width:1px;height:226px;background:#c0c0c0"></div>
<div class="a" style="left:745px;top:0;width:1px;height:226px;background:#c0c0c0"></div>
<div class="a" style="left:803px;top:0;width:1px;height:226px;background:#c0c0c0"></div>
<div class="a" style="left:883px;top:0;width:1px;height:226px;background:#c0c0c0"></div>
<div class="a" style="left:955px;top:0;width:1px;height:226px;background:#c0c0c0"></div>
</div>
<div class="a" style="left:1051px;top:494px;width:2px;height:52px;background:#888"></div>
<div class="a" style="left:1043px;top:477px;width:1px;height:19px;background:#fff"></div>
<div class="t" style="top:732px;left:66px;font-size:11px;letter-spacing:0.5px"><span style="--w:52.0;transform:scaleX(1.049);transform-origin:left">最大収支:</span></div>
<div class="e" style="left:122px;top:731px;width:72px;height:17px;"></div>
<div class="t n" style="top:732px;left:119px;width:72px;text-align:right;"><span style="--w:39.0;transform:scaleX(0.830);transform-origin:right">690,830</span></div>
<div class="t" style="top:732px;left:200px;font-size:11px;letter-spacing:0.5px"><span style="--w:52.0;transform:scaleX(1.049);transform-origin:left">最小収支:</span></div>
<div class="e" style="left:257px;top:731px;width:71px;height:17px;"></div>
<div class="t n" style="top:732px;left:254px;width:71px;text-align:right;"><span style="--w:46.0;transform:scaleX(0.843);transform-origin:right">−639,000</span></div>
<div class="t" style="top:732px;left:334px;font-size:11px;letter-spacing:0.5px"><span style="--w:52.0;transform:scaleX(1.049);transform-origin:left">最大累計:</span></div>
<div class="e" style="left:390px;top:731px;width:72px;height:17px;"></div>
<div class="t n" style="top:732px;left:387px;width:72px;text-align:right;"><span style="--w:46.0;transform:scaleX(0.843);transform-origin:right">−406,100</span></div>
<div class="t" style="top:732px;left:468px;font-size:11px;letter-spacing:0.5px"><span style="--w:52.0;transform:scaleX(1.049);transform-origin:left">最小累計:</span></div>
<div class="e" style="left:525px;top:731px;width:71px;height:17px;"></div>
<div class="t n" style="top:732px;left:522px;width:71px;text-align:right;"><span style="--w:55.0;transform:scaleX(0.840);transform-origin:right">−3,221,750</span></div>
<div class="a" style="left:605px;top:731px;width:80px;height:17px;background:#fff;border-left:1px solid #696969;border-top:1px solid #696969;box-shadow:inset 1px 1px 0 #a0a0a0"></div>
<div class="t n" style="top:732px;left:602px;width:80px;text-align:right;"><span style="--w:54.0;transform:scaleX(0.830);transform-origin:right">22,561,800</span></div>
<div class="a" style="left:685px;top:731px;width:72px;height:17px;background:#fff;border-left:1px solid #696969;border-top:1px solid #696969;box-shadow:inset 1px 1px 0 #a0a0a0"></div>
<div class="t n" style="top:732px;left:674px;width:80px;text-align:right;"><span style="--w:54.0;transform:scaleX(0.830);transform-origin:right">21,004,720</span></div>
<div class="a" style="left:757px;top:731px;width:58px;height:17px;background:#fff;border-left:1px solid #696969;border-top:1px solid #696969;box-shadow:inset 1px 1px 0 #a0a0a0"></div>
<div class="t n" style="top:732px;left:732px;width:80px;text-align:right;"><span style="--w:28.0;transform:scaleX(0.759);transform-origin:right">17.?%</span></div>
<div class="a" style="left:815px;top:731px;width:80px;height:17px;background:#fff;border-left:1px solid #696969;border-top:1px solid #696969;box-shadow:inset 1px 1px 0 #a0a0a0"></div>
<div class="t n" style="top:732px;left:812px;width:80px;text-align:right;"><span style="--w:28.0;transform:scaleX(0.759);transform-origin:right">19.6%</span></div>
<div class="a" style="left:895px;top:731px;width:72px;height:17px;background:#fff;border-left:1px solid #696969;border-top:1px solid #696969;box-shadow:inset 1px 1px 0 #a0a0a0"></div>
<div class="t n" style="top:732px;left:884px;width:80px;text-align:right;"><span style="--w:55.0;transform:scaleX(0.840);transform-origin:right">−1,557,080</span></div>
<div class="a" style="left:2px;top:759px;width:1067px;height:1px;background:#a0a0a0"></div>
<div class="a" style="left:2px;top:760px;width:1067px;height:1px;background:#fff"></div>
<div class="b" style="left:17px;top:768px;width:105px;height:25px;"></div>
<div class="t" style="top:773px;left:17px;width:105px;text-align:center;"><span style="--w:78.0;transform:scaleX(0.812);transform-origin:center">シミュレーション</span></div>
<div class="b" style="left:153px;top:768px;width:105px;height:25px;"></div>
<div class="t" style="top:773px;left:153px;width:105px;text-align:center;"><span style="--w:86.0;transform:scaleX(0.896);transform-origin:center">条件ファイル保存</span></div>
<div class="b" style="left:264px;top:768px;width:105px;height:25px;"></div>
<div class="t" style="top:773px;left:264px;width:105px;text-align:center;"><span style="--w:86.0;transform:scaleX(0.896);transform-origin:center">条件ファイル読込</span></div>
<div class="b" style="left:375px;top:768px;width:105px;height:25px;"></div>
<div class="t" style="top:773px;left:375px;width:105px;text-align:center;"><span style="--w:66.0;transform:scaleX(0.917);transform-origin:center">条件全クリア</span></div>
<div class="b" style="left:949px;top:768px;width:105px;height:25px;"></div>
<div class="t" style="top:773px;left:949px;width:105px;text-align:center;"><span style="--w:32.6;transform:scaleX(0.906);transform-origin:center">閉じる</span></div>
<div class="a" style="left:2px;top:800px;width:1067px;height:1px;background:#a0a0a0"></div>
<div class="a" style="left:2px;top:801px;width:1067px;height:1px;background:#fff"></div>
<div class="a" style="left:2px;top:803px;width:178px;height:17px;border-top:1px solid #a0a0a0;border-left:1px solid #a0a0a0"></div>
<div class="a" style="left:183px;top:803px;width:886px;height:17px;border-top:1px solid #a0a0a0;border-left:1px solid #a0a0a0"></div>
<div class="blue" style="left:569px;top:69px;width:149px;height:36px;"></div>
<div class="blue" style="left:712px;top:99px;width:180px;height:32px;"></div>
<div class="blue" style="left:584px;top:345px;width:155px;height:36px;"></div>
<div class="blue" style="left:585px;top:391px;width:150px;height:39px;"></div>
<div class="blue" style="left:894px;top:431px;width:136px;height:49px;"></div>
<div class="blue" style="left:801px;top:722px;width:179px;height:37px;"></div>
<script>
(function(){var L=document.querySelectorAll('.t>span');for(var i=0;i<L.length;i++){var s=L[i];var w=parseFloat(s.style.getPropertyValue('--w'));if(!w)continue;var o=s.style.transform;s.style.transform='none';var n=s.getBoundingClientRect().width;if(n>0){var k=w/n;if(k<0.55)k=0.55;if(k>1.25)k=1.25;s.style.transform='scaleX('+k.toFixed(3)+')';}else{s.style.transform=o;}}})();
</script>
</body></html>
